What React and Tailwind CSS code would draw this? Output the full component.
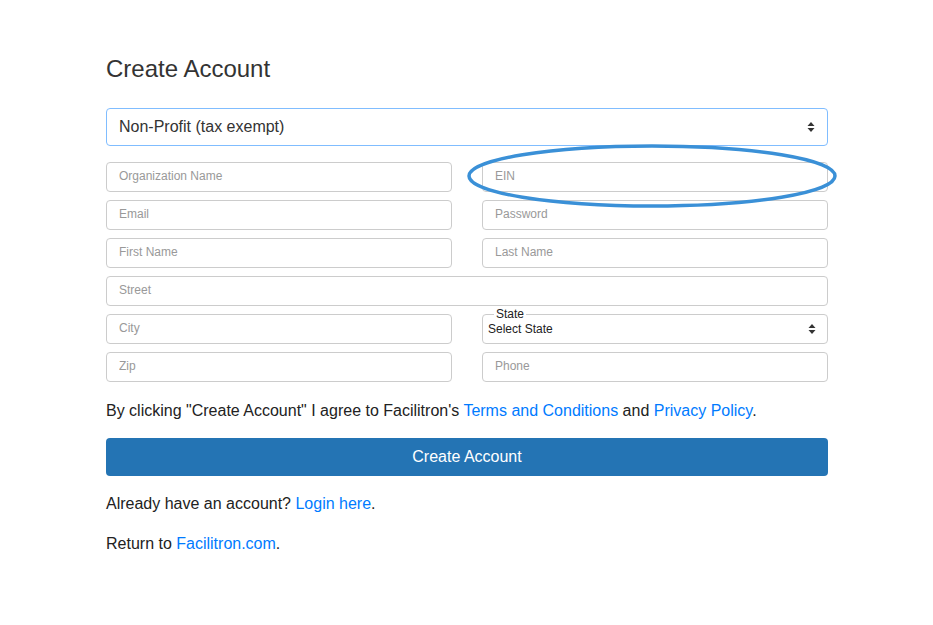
import React from 'react';

const inputCls =
  'w-full h-[30px] border border-[#cccccc] rounded-[4px] px-[12px] pb-[3px] text-[12px] text-[#333] placeholder:text-[#999] bg-white outline-none';

const Field = ({ placeholder }) => (
  <input type="text" placeholder={placeholder} className={inputCls} />
);

const Arrows = () => (
  <svg width="8" height="12" viewBox="0 0 8 12" className="shrink-0">
    <path d="M4 1 L7.5 5 H0.5 Z" fill="#333" />
    <path d="M4 11 L7.5 7 H0.5 Z" fill="#333" />
  </svg>
);

export default function App() {
  return (
    <div
      className="min-h-[625px] bg-white"
      style={{ fontFamily: '"Liberation Sans", Arial, sans-serif' }}
    >
      <div className="w-[722px] ml-[106px] pt-[54px]">
        <h1 className="text-[24px] leading-[30px] text-[#333]">Create Account</h1>

        {/* account type */}
        <div className="mt-[24px] h-[38px] border border-[#80bdff] rounded-[4px] flex items-center justify-between pl-[12px] pr-[12px] text-[16px] text-[#333]">
          <span>Non-Profit (tax exempt)</span>
          <Arrows />
        </div>

        <div className="mt-[16px] grid grid-cols-2 gap-x-[30px] gap-y-[8px]">
          <Field placeholder="Organization Name" />
          <div className="relative">
            <Field placeholder="EIN" />
            <svg
              className="absolute left-[-16px] top-[-18px] pointer-events-none"
              width="372"
              height="66"
              viewBox="0 0 372 66"
            >
              <ellipse cx="186" cy="32" rx="183" ry="30" fill="none" stroke="#3a90d7" strokeWidth="3.5" />
            </svg>
          </div>
          <Field placeholder="Email" />
          <Field placeholder="Password" />
          <Field placeholder="First Name" />
          <Field placeholder="Last Name" />
          <div className="col-span-2">
            <Field placeholder="Street" />
          </div>
          <Field placeholder="City" />
          <fieldset className="border border-[#cccccc] rounded-[4px] px-[5px] mt-[-6px] h-[36px] flex">
            <legend className="px-[2px] ml-[6px] text-[12px] leading-[12px] text-[#222]">State</legend>
            <div className="flex-1 flex items-center justify-between pr-[6px] text-[12px] text-[#222] mt-[-5px]">
              <span>Select State</span>
              <Arrows />
            </div>
          </fieldset>
          <Field placeholder="Zip" />
          <Field placeholder="Phone" />
        </div>

        <p className="mt-[17px] text-[16px] leading-[24px] text-[#222]">
          By clicking "Create Account" I agree to Facilitron's{' '}
          <a className="text-[#007bff]">Terms and Conditions</a> and{' '}
          <a className="text-[#007bff]">Privacy Policy</a>.
        </p>

        <button className="mt-[15px] w-full h-[38px] rounded-[4px] bg-[#2474b4] text-white text-[16px]">
          Create Account
        </button>

        <p className="mt-[16px] text-[16px] leading-[24px] text-[#222]">
          Already have an account? <a className="text-[#007bff]">Login here</a>.
        </p>
        <p className="mt-[16px] text-[16px] leading-[24px] text-[#222]">
          Return to <a className="text-[#007bff]">Facilitron.com</a>.
        </p>
      </div>
    </div>
  );
}
